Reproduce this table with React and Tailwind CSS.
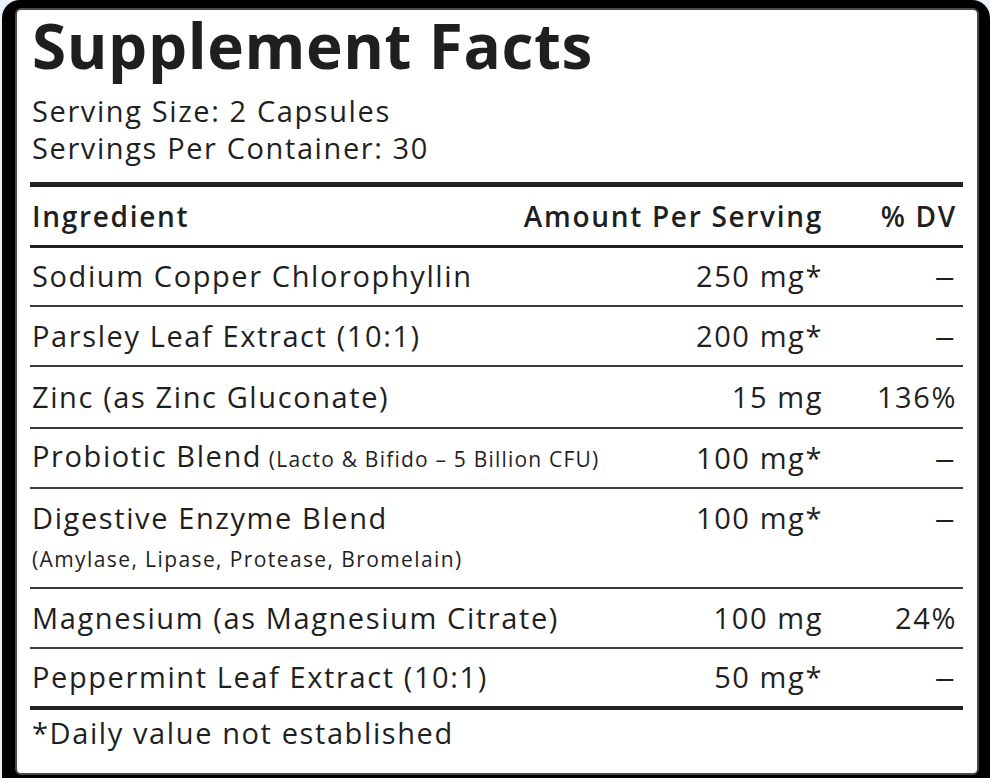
const rows = [
  { name: 'Sodium Copper Chlorophyllin', amount: '250 mg*', dv: '–', h: 'h-[59px]' },
  { name: 'Parsley Leaf Extract (10:1)', amount: '200 mg*', dv: '–', h: 'h-[60px]' },
  { name: 'Zinc (as Zinc Gluconate)', amount: '15 mg', dv: '136%', h: 'h-[62px]' },
  { name: 'Probiotic Blend', note: '(Lacto & Bifido – 5 Billion CFU)', amount: '100 mg*', dv: '–', h: 'h-[60px]' },
  { name: 'Digestive Enzyme Blend', sub: '(Amylase, Lipase, Protease, Bromelain)', amount: '100 mg*', dv: '–', h: 'h-[100px]' },
  { name: 'Magnesium (as Magnesium Citrate)', amount: '100 mg', dv: '24%', h: 'h-[60px]' },
  { name: 'Peppermint Leaf Extract (10:1)', amount: '50 mg*', dv: '–', h: 'h-[57px]', last: true },
];

function Dv({ value }) {
  if (value === '–') {
    return <span className="inline-block origin-right scale-x-[1.4]">–</span>;
  }
  return value;
}

function Row({ row }) {
  if (row.sub) {
    return (
      <div className={`flex items-start pt-[10px] ${row.h} border-b-2 border-[#3a3a3a]`}>
        <div className="flex-1 pl-[2px]">
          <div className="leading-[37px]">{row.name}</div>
          <div className="mt-[8px] text-[21px] leading-[30px] tracking-[1.4px]">{row.sub}</div>
        </div>
        <div className="-mr-[2px] text-right leading-[37px]">{row.amount}</div>
        <div className="w-[142px] pr-[6px] text-right leading-[37px]">
          <Dv value={row.dv} />
        </div>
      </div>
    );
  }
  return (
    <div className={`flex items-center pb-[2px] ${row.h} ${row.last ? '' : 'border-b-2 border-[#3a3a3a]'}`}>
      <div className="flex-1 pl-[2px] leading-[37px]">
        {row.name}
        {row.note && <span className="text-[21px] tracking-[1.2px]"> {row.note}</span>}
      </div>
      <div className="-mr-[2px] text-right leading-[37px]">{row.amount}</div>
      <div className="w-[142px] pr-[6px] text-right leading-[37px]">
        <Dv value={row.dv} />
      </div>
    </div>
  );
}

export default function App() {
  return (
    <div className="h-[778px] overflow-hidden bg-[#e8f1f9]">
      <div className="ml-[2px] w-[988px] rounded-[18px] bg-black pt-[8px] pr-[11px] pb-[30px] pl-[13px]">
        <div
          className="rounded-[6px] border-2 border-[#4a4a4a] bg-white pr-[14px] pl-[13px] text-[#1f1f1f]"
          style={{ fontFamily: '"Open Sans", sans-serif' }}
        >
          <h1 className="pl-[2px] text-[62px] font-bold leading-[70px] tracking-[0.6px]">Supplement Facts</h1>
          <div className="mt-[12px] pl-[2px] text-[29px] leading-[37px] tracking-[1.6px]">
            <div>Serving Size: 2 Capsules</div>
            <div>Servings Per Container: 30</div>
          </div>
          <div className="mt-[16px] h-[5px] bg-[#222]" />
          <div className="flex h-[58px] items-center text-[28px] font-semibold tracking-[1.7px]">
            <div className="flex-1 pl-[2px]">Ingredient</div>
            <div className="-mr-[2px] text-right">Amount Per Serving</div>
            <div className="w-[142px] pr-[6px] text-right">% DV</div>
          </div>
          <div className="h-[3px] bg-[#222]" />
          <div className="text-[29px] tracking-[1.6px]">
            {rows.map((row) => (
              <Row key={row.name} row={row} />
            ))}
          </div>
          <div className="h-[4px] bg-[#222]" />
          <div className="h-[63px] pt-[4px] pl-[2px] text-[29px] leading-[37px] tracking-[1.6px]">
            *Daily value not established
          </div>
        </div>
      </div>
    </div>
  );
}
